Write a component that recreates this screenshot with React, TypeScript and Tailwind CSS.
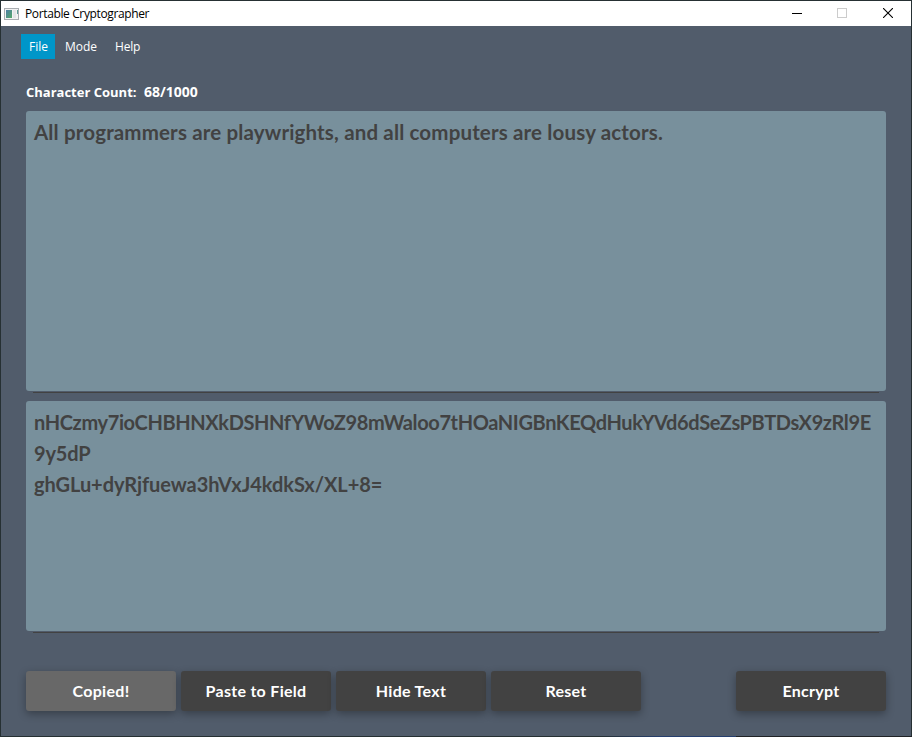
import type { ReactNode } from "react";

function AppIcon() {
  return (
    <svg width="16" height="14" viewBox="0 0 16 14" shapeRendering="crispEdges">
      <defs>
        <linearGradient id="pane" x1="0" y1="0" x2="1" y2="1">
          <stop offset="0" stopColor="#4d7fa6" />
          <stop offset="1" stopColor="#55a868" />
        </linearGradient>
      </defs>
      <rect x="0" y="1" width="15" height="12" fill="#a9adb1" />
      <rect x="1" y="2" width="13" height="10" fill="#f2f2f2" />
      <rect x="2" y="3" width="6" height="8" fill="url(#pane)" />
      <rect x="9" y="3" width="3" height="8" fill="#e3e5e6" />
      <rect x="13" y="3" width="1" height="4" fill="#5f9d97" />
    </svg>
  );
}

function TitleBar() {
  return (
    <header className="flex h-[25px] shrink-0 items-center bg-white pl-[3px] pr-[18px] text-black">
      <AppIcon />
      <h1 className="ml-[5px] text-[12px] leading-[24px] tracking-[-0.37px]">Portable Cryptographer</h1>
      <div className="ml-auto flex items-center">
        <svg className="mr-[35px] -mt-px" width="10" height="10" viewBox="0 0 10 10" shapeRendering="crispEdges">
          <rect y="5" width="10" height="1" fill="#000" />
        </svg>
        <svg className="mr-9 -mt-px" width="10" height="10" viewBox="0 0 10 10">
          <rect x="0.5" y="0.5" width="9" height="9" fill="none" stroke="#ccc" />
        </svg>
        <svg className="-mt-px" width="10" height="10" viewBox="0 0 10 10">
          <path d="M0 0L10 10M10 0L0 10" stroke="#000" strokeWidth="1.1" />
        </svg>
      </div>
    </header>
  );
}

function Field({ className, children }: { className: string; children: ReactNode }) {
  return (
    <div className="flex flex-col">
      <div
        className={`rounded-[3px] bg-[#78909c] pl-2 font-['Lato',sans-serif] text-[20px] font-bold leading-[31px] text-[#424242] ${className}`}
      >
        {children}
      </div>
      <div className="mx-[7px] mt-px h-px bg-[#424242]" />
    </div>
  );
}

function Button({ className = "bg-[#424242]", children }: { className?: string; children: ReactNode }) {
  return (
    <button
      className={`h-10 w-[150px] rounded-[3px] pb-px font-['Lato',sans-serif] text-[16px] font-bold tracking-[0.3px] text-white shadow-[0_3px_9px_rgba(0,0,0,0.32)] ${className}`}
    >
      {children}
    </button>
  );
}

export default function App() {
  return (
    <div className="h-[737px] w-[912px] bg-[#263033] bg-[linear-gradient(90deg,#263033_600px,#263f6e_660px,#263f6e_736px,#202326_736px)] bg-[length:100%_1px] bg-bottom bg-no-repeat p-px font-['Open_Sans','Noto_Sans',sans-serif]">
      <div className="flex h-full flex-col overflow-hidden bg-[#515c6b]">
        <TitleBar />
        <nav className="ml-5 mt-2 flex h-[25px] text-[12px] leading-[25px] text-white">
          <span className="w-[34px] bg-[#0096c9] pl-2">File</span>
          <span className="ml-[10px] w-[50px]">Mode</span>
          <span className="tracking-[-0.2px]">Help</span>
        </nav>
        <main className="flex flex-col px-[25px]">
          <p className="mt-[22px] flex h-[30px] text-[13px] font-bold leading-[22px] text-white">
            <span className="w-[118px]">Character Count:</span>
            <span className="text-[14px]">68/1000</span>
          </p>
          <Field className="h-[280px] pt-[6px]">
            <p className="whitespace-nowrap text-[20.5px] tracking-[0.155px]">
              All programmers are playwrights, and all computers are lousy actors.
            </p>
          </Field>
          <div className="h-2" />
          <Field className="h-[230px] pt-[6px]">
            <p className="whitespace-nowrap tracking-[-0.375px]">
              nHCzmy7ioCHBHNXkDSHNfYWoZ98mWaloo7tHOaNIGBnKEQdHukYVd6dSeZsPBTDsX9zRl9E
            </p>
            <p className="tracking-[-0.2px]">9y5dP</p>
            <p className="tracking-[-0.06px]">ghGLu+dyRjfuewa3hVxJ4kdkSx/XL+8=</p>
          </Field>
          <div className="mt-[38px] flex gap-[5px]">
            <Button className="bg-[#686868]">Copied!</Button>
            <Button>Paste to Field</Button>
            <Button>Hide Text</Button>
            <Button>Reset</Button>
            <div className="ml-auto">
              <Button>Encrypt</Button>
            </div>
          </div>
        </main>
      </div>
    </div>
  );
}
